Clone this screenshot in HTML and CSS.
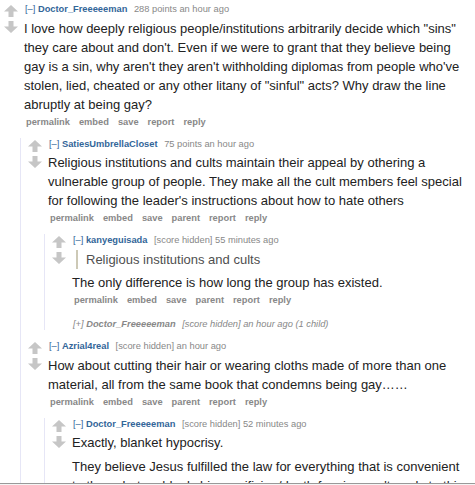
FILE: index.html
```html
<!DOCTYPE html>
<html lang="en">

<head>
    <meta charset="UTF-8">
    <meta name="viewport" content="width=device-width, initial-scale=1.0">
    <title>comments</title>
    <link rel="stylesheet" href="styles.css">
</head>

<body>
    <div class="thread">

        <div class="comment">
            <div class="midcol">
                <svg class="arrow" viewBox="0 0 14 12"><path d="M7 0 L14 6.5 H9.5 V12 H4.5 V6.5 H0 Z"/></svg>
                <svg class="arrow" viewBox="0 0 14 12"><path d="M7 12 L14 5.5 H9.5 V0 H4.5 V5.5 H0 Z"/></svg>
            </div>
            <div class="entry">
                <p class="tagline"><a class="expand">[–]</a> <a class="author">Doctor_Freeeeeman</a> <span class="score">288 points</span> an hour ago</p>
                <div class="md">
                    <p>I love how deeply religious people/institutions arbitrarily decide which "sins" they care about and don't. Even if we were to grant that they believe being gay is a sin, why aren't they aren't withholding diplomas from people who've stolen, lied, cheated or any other litany of "sinful" acts? Why draw the line abruptly at being gay?</p>
                </div>
                <ul class="buttons">
                    <li>permalink</li>
                    <li>embed</li>
                    <li>save</li>
                    <li>report</li>
                    <li>reply</li>
                </ul>
            </div>

            <div class="child">

                <div class="comment">
                    <div class="midcol">
                        <svg class="arrow" viewBox="0 0 14 12"><path d="M7 0 L14 6.5 H9.5 V12 H4.5 V6.5 H0 Z"/></svg>
                        <svg class="arrow" viewBox="0 0 14 12"><path d="M7 12 L14 5.5 H9.5 V0 H4.5 V5.5 H0 Z"/></svg>
                    </div>
                    <div class="entry">
                        <p class="tagline"><a class="expand">[–]</a> <a class="author">SatiesUmbrellaCloset</a> <span class="score">75 points</span> an hour ago</p>
                        <div class="md">
                            <p>Religious institutions and cults maintain their appeal by othering a vulnerable group of people. They make all the cult members feel special for following the leader's instructions about how to hate others</p>
                        </div>
                        <ul class="buttons">
                            <li>permalink</li>
                            <li>embed</li>
                            <li>save</li>
                            <li>parent</li>
                            <li>report</li>
                            <li>reply</li>
                        </ul>
                    </div>

                    <div class="child">
                        <div class="comment">
                            <div class="midcol">
                                <svg class="arrow" viewBox="0 0 14 12"><path d="M7 0 L14 6.5 H9.5 V12 H4.5 V6.5 H0 Z"/></svg>
                                <svg class="arrow" viewBox="0 0 14 12"><path d="M7 12 L14 5.5 H9.5 V0 H4.5 V5.5 H0 Z"/></svg>
                            </div>
                            <div class="entry">
                                <p class="tagline"><a class="expand">[–]</a> <a class="author">kanyeguisada</a> <span class="score">[score hidden]</span> 55 minutes ago</p>
                                <div class="md">
                                    <blockquote><p>Religious institutions and cults</p></blockquote>
                                    <p>The only difference is how long the group has existed.</p>
                                </div>
                                <ul class="buttons">
                                    <li>permalink</li>
                                    <li>embed</li>
                                    <li>save</li>
                                    <li>parent</li>
                                    <li>report</li>
                                    <li>reply</li>
                                </ul>
                            </div>
                        </div>

                        <div class="comment collapsed">
                            <p class="tagline"><a class="expand">[+]</a> <a class="author">Doctor_Freeeeeman</a> <span class="score">[score hidden]</span> an hour ago (1 child)</p>
                        </div>
                    </div>
                </div>

                <div class="comment">
                    <div class="midcol">
                        <svg class="arrow" viewBox="0 0 14 12"><path d="M7 0 L14 6.5 H9.5 V12 H4.5 V6.5 H0 Z"/></svg>
                        <svg class="arrow" viewBox="0 0 14 12"><path d="M7 12 L14 5.5 H9.5 V0 H4.5 V5.5 H0 Z"/></svg>
                    </div>
                    <div class="entry">
                        <p class="tagline"><a class="expand">[–]</a> <a class="author">Azrial4real</a> <span class="score">[score hidden]</span> an hour ago</p>
                        <div class="md">
                            <p>How about cutting their hair or wearing cloths made of more than one material, all from the same book that condemns being gay……</p>
                        </div>
                        <ul class="buttons">
                            <li>permalink</li>
                            <li>embed</li>
                            <li>save</li>
                            <li>parent</li>
                            <li>report</li>
                            <li>reply</li>
                        </ul>
                    </div>

                    <div class="child">
                        <div class="comment">
                            <div class="midcol">
                                <svg class="arrow" viewBox="0 0 14 12"><path d="M7 0 L14 6.5 H9.5 V12 H4.5 V6.5 H0 Z"/></svg>
                                <svg class="arrow" viewBox="0 0 14 12"><path d="M7 12 L14 5.5 H9.5 V0 H4.5 V5.5 H0 Z"/></svg>
                            </div>
                            <div class="entry">
                                <p class="tagline"><a class="expand">[–]</a> <a class="author">Doctor_Freeeeeman</a> <span class="score">[score hidden]</span> 52 minutes ago</p>
                                <div class="md">
                                    <p>Exactly, blanket hypocrisy.</p>
                                    <p>They believe Jesus fulfilled the law for everything that is convenient to them, but suddenly his crucifixion/death for sins can't apply to this one thing.</p>
                                </div>
                            </div>
                        </div>
                    </div>
                </div>

            </div>
        </div>

    </div>
    <div class="edge"></div>
</body>

</html>
```

FILE: styles.css
```css
html {
    height: 100%;
}

body {
    margin: 0;
    height: 100%;
    overflow: hidden;
    background-color: #fff;
    font-family: "Liberation Sans", Arial, sans-serif;
    color: #222;
}

p {
    margin: 0;
}

.thread {
    padding: 3px 10px 0 4px;
}

/* one comment: arrows, text, replies */
.comment {
    display: grid;
    grid-template-columns: 14px 1fr;
    column-gap: 6px;
}

.midcol {
    display: flex;
    flex-direction: column;
    gap: 4px;
    padding-top: 2px;
}

.arrow {
    width: 14px;
    height: 12px;
    fill: #c6c6c6;
}

.entry {
    min-width: 0;
}

.tagline {
    font-size: 9.3px;
    line-height: 12px;
    color: #888;
    padding-left: 1px;
}

.tagline a {
    color: #369;
}

.tagline .author {
    font-weight: bold;
    margin-right: 4px;
}

.tagline .score {
    color: #888;
}

.md {
    font-size: 13px;
    line-height: 19px;
    color: #222;
    margin-top: 3.5px;
}

.md p + p,
.md blockquote + p {
    margin-top: 4.5px;
}

.md blockquote {
    margin: 0 0 0 4px;
    padding-left: 8px;
    border-left: 2px solid #cdc9b6;
    color: #4f4f4f;
}

.buttons {
    display: flex;
    gap: 9px;
    list-style: none;
    margin: 2px 0 0;
    padding: 0 0 0 2px;
    font-size: 9.3px;
    line-height: 12px;
    font-weight: bold;
    color: #888;
}

/* replies sit under the arrows column, with a thread line */
.child {
    grid-column: 1 / 3;
    margin: 10px 0 0 16px;
    padding-left: 7px;
    border-left: 1px solid #e6e6f6;
    display: flex;
    flex-direction: column;
    gap: 10px;
}

.collapsed {
    display: block;
    margin-top: 2px;
    padding-left: 20px;
}

.collapsed .tagline,
.collapsed .tagline a {
    color: #888;
    font-style: italic;
}

.edge {
    position: fixed;
    left: 0;
    right: 0;
    bottom: 0;
    height: 1px;
    border-top: 1px solid #999;
    background-color: #f4f4f4;
}
```
